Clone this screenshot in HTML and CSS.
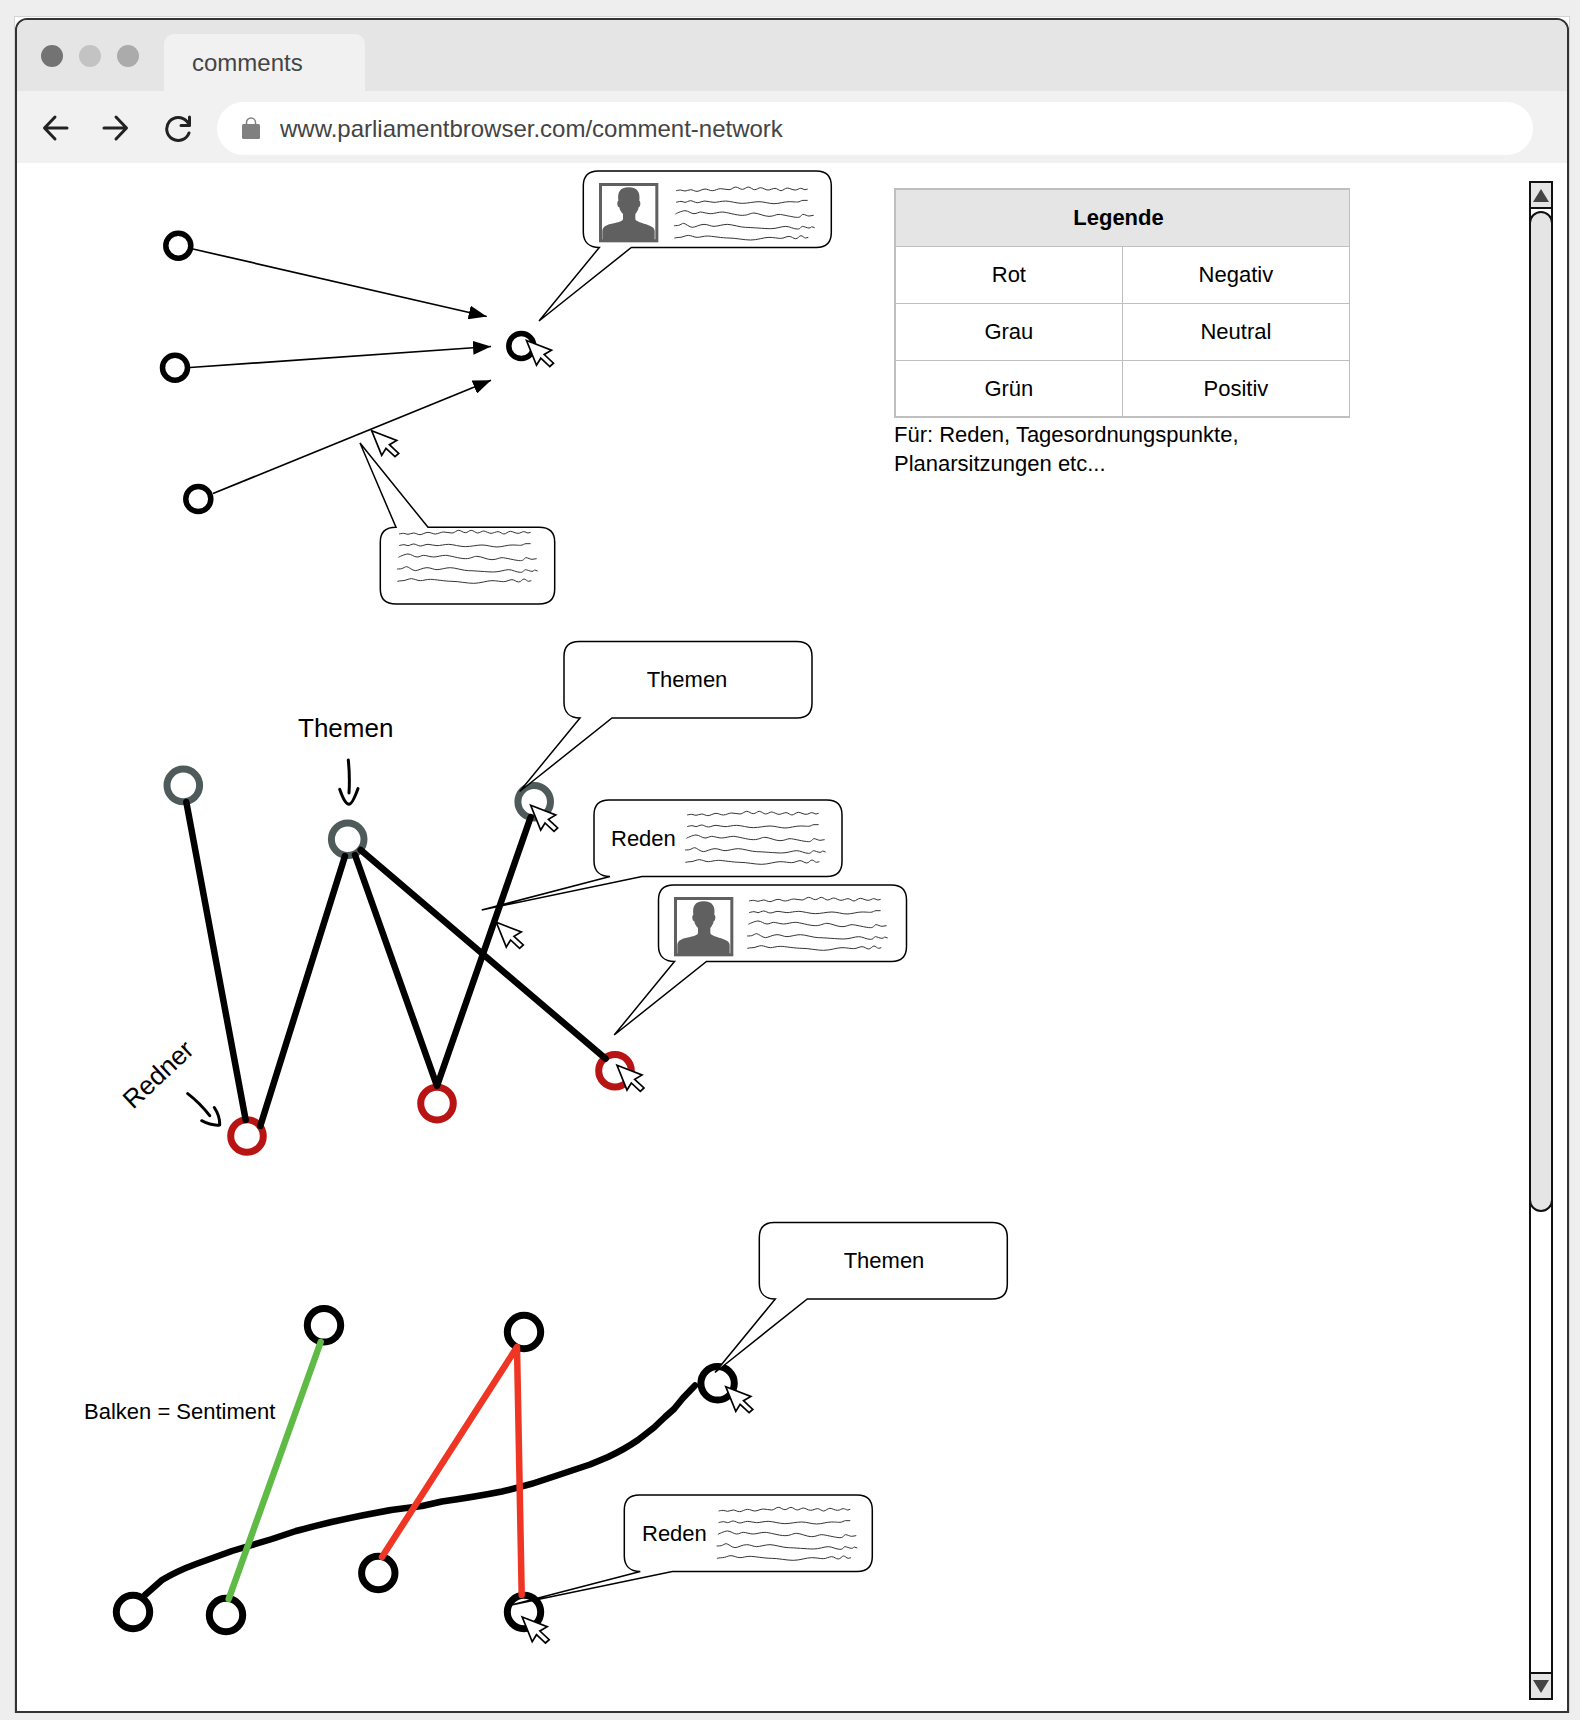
FILE: index.html
```html
<!DOCTYPE html>
<html lang="de">
<head>
<meta charset="utf-8">
<title>comments</title>
<link rel="stylesheet" href="styles.css">
</head>
<body>
<div class="frame">
<div class="window">
  <header class="tabstrip">
    <div class="dots"><span class="dot dot-dark"></span><span class="dot dot-light"></span><span class="dot dot-mid"></span></div>
    <a class="tab" href="#network">comments</a>
  </header>
  <nav class="toolbar">
    <button class="nav-button" type="button" aria-label="Zurück"><svg viewBox="0 0 28 28"><path d="M25 14H3M13 3 2.500 14 13 25"/></svg></button>
    <button class="nav-button" type="button" aria-label="Vor"><svg viewBox="0 0 28 28"><path d="M3 14h22M15 3l10.500 11L15 25"/></svg></button>
    <button class="nav-button reload" type="button" aria-label="Neu laden"><svg viewBox="0 0 28 28"><path d="M25 19A11.500 11.500 0 1 1 23 7.500L25.500 10.500M25.500 3v8.500H17"/></svg></button>
    <div class="address">
      <svg class="lock" viewBox="0 0 18 22"><rect x="0" y="7" width="18" height="15" rx="1.500" fill="#808080"/><path d="M4.500 8V5.500a4.500 4.500 0 0 1 9 0V8" fill="none" stroke="#808080" stroke-width="1.500"/></svg>
      <input class="url" type="text" aria-label="Adresse" value="www.parliamentbrowser.com/comment-network">
    </div>
  </nav>
  <main class="board" id="network">
    <svg class="diagram" viewBox="17 163 1000 1500">
      <defs>
        <marker id="arrow" viewBox="0 0 18 14" refX="18" refY="7" markerWidth="18" markerHeight="14" markerUnits="userSpaceOnUse" orient="auto"><path d="M0 0 18 7 0 14z"/></marker>
        <path id="cursor" class="cursor" d="M0 0 25 9.700 17.700 14 27 22.700 23.300 26 14.300 17.700 10 24.700z"/>
        <g id="portrait"><g transform="scale(.3333) translate(-60 -53)">
          <rect x="64.500" y="57.500" width="169" height="169" fill="#fff" stroke="#606060" stroke-width="9"/>
          <path fill="#606060" d="M70 230V197C71 180 90 177 108 173C122 170 132 166 132 161V146C126 140 122 134 121 126C114 124 113 108 118 106C115 82 122 66 149 66C176 66 184 82 181 106C186 108 185 124 179 126C178 134 174 140 169 146V161C169 166 180 170 195 175C212 180 226 184 227 197V230Z"/>
        </g></g>
        <g id="doodle"><g transform="scale(.3333) translate(-291 -77)" class="doodle">
          <path d="M291 77S300 75 305 75 313 78 318 78 329 74 335 74 347 79 354 79 370 72 378 72 392 77 400 77 416 71 425 71 442 74 450 74 463 66 470 66 483 73 490 73 502 66 508 66 521 74 527 74 539 68 545 68 560 75 567 75 581 70 588 70 600 77 606 77 618 69 625 69 640 75 648 75 659 70 665 70 674 74 678 74L686 72"/>
          <path d="M291 112S301 109 306 109 314 112 318 112 329 107 335 107 348 113 355 113 370 108 378 108 396 112 405 112 428 108 440 108 474 115 490 115 524 110 540 110 570 116 585 116 615 110 630 110 647 111 655 111 666 106 672 106L686 106"/>
          <path d="M289 147S308 137 318 137 336 146 345 146 358 141 365 141 385 146 395 146 418 141 430 141 472 151 490 151 513 144 525 144 555 154 570 154 590 148 600 148 642 157 655 157 666 148 672 148 684 153 690 153L704 151"/>
          <path d="M285 182S294 182 299 181 309 175 314 175 332 187 340 187 363 178 375 178 395 184 405 184 432 178 445 178 485 187 500 187 557 191 575 191 608 184 620 184 643 192 655 192 665 184 670 184 684 189 690 189 696 185 698 185L707 188"/>
          <path d="M286 219S296 217 303 217 320 211 328 211 346 217 355 217 373 213 385 213 430 219 450 219 495 225 515 225 555 217 570 217 595 220 605 220 622 214 630 214 643 221 650 221 661 212 666 212 675 219 680 219L688 217"/>
        </g></g>
      </defs>

      <!-- comments pointing at one speaker -->
      <g class="arrow-line">
        <path d="M194 249 487.700 316.500"/><path d="M191 367.500 492 346.500"/><path d="M214 493.500 492 380.300"/>
      </g>
      <g class="node small">
        <circle cx="179.300" cy="245.700" r="12.500"/><circle cx="176" cy="367.700" r="12.500"/><circle cx="199.300" cy="499" r="12.500"/><circle cx="522.300" cy="346" r="12.500"/>
      </g>
      <path class="callout" transform="translate(584.300 171)" d="M16 76.500C6 76.500 0 71 0 61V15C0 5 5 0 15 0H233C243 0 248 5 248 15V61.500C248 71.500 243 76.500 233 76.500H48L-44.300 150z"/>
      <use href="#portrait" x="600" y="183"/>
      <use href="#doodle" x="677" y="190.700"/>
      <path class="callout" d="M429 527.300H540C550 527.300 555.700 532 555.700 542V589C555.700 599 550 604 540 604H397C387 604 381.300 599 381.300 589V542C381.300 532 387 527.300 397 527.300L361 443z"/>
      <use href="#doodle" x="400" y="534"/>

      <!-- topics and speakers -->
      <path class="callout" transform="translate(595 800)" d="M16 76.500C6 76.500 0 71 0 61V15C0 5 5 0 15 0H233C243 0 248 5 248 15V61.500C248 71.500 243 76.500 233 76.500H48L-112.300 110z"/>
      <g class="node topic">
        <circle cx="184.300" cy="785.400" r="16.300"/><circle cx="348.700" cy="839.300" r="16.300"/><circle cx="535.200" cy="801.700" r="16.300"/>
      </g>
      <g class="node speaker">
        <circle cx="248" cy="1136" r="16.300"/><circle cx="438" cy="1103.600" r="16.300"/><circle cx="616" cy="1070.700" r="16.300"/>
      </g>
      <path class="edge" d="M187.300 802 246.700 1120M346 856 261.300 1126M356 855 438 1086 531.700 817M361.700 850 606.700 1058.700"/>
      <path class="hand" d="M349.300 760Q351 776 350 793M340.700 789.300C344 799 347 804.300 350 804.300S356 797 359 788.600M188.700 1093.600Q201 1103 210.700 1115.700M202.700 1120.700Q213 1126 220.700 1125 221 1116 215.300 1107.500"/>
      <path class="callout" transform="translate(565 641.500)" d="M16 76.500C6 76.500 0 71 0 61V15C0 5 5 0 15 0H233C243 0 248 5 248 15V61.500C248 71.500 243 76.500 233 76.500H48L-44.300 150z"/>
      <path class="callout" transform="translate(659.500 885)" d="M16 76.500C6 76.500 0 71 0 61V15C0 5 5 0 15 0H233C243 0 248 5 248 15V61.500C248 71.500 243 76.500 233 76.500H48L-44.300 150z"/>
      <use href="#doodle" x="688" y="815"/>
      <use href="#portrait" x="675" y="897"/>
      <use href="#doodle" x="750" y="901"/>
      <text class="label middle" x="688" y="687">Themen</text>
      <text class="label" x="612" y="846">Reden</text>
      <text class="note" x="299" y="737">Themen</text>
      <text class="note" transform="translate(134 1110) rotate(-43)">Redner</text>

      <!-- sentiment edges -->
      <g class="node">
        <circle cx="325" cy="1325.300" r="16.700"/><circle cx="525" cy="1332" r="16.700"/><circle cx="134" cy="1612" r="16.700"/><circle cx="227" cy="1615" r="16.700"/><circle cx="379.300" cy="1573" r="16.700"/><circle cx="525" cy="1612" r="16.700"/><circle cx="718.600" cy="1383.300" r="16.700"/>
      </g>
      <path class="edge" d="M146 1595 163 1580Q178 1571 197 1564L233 1551 273 1539 297 1531Q330 1522 363 1515.500 393 1509 423 1506L443 1501.500Q475 1497 503 1491.500 532 1485 558 1475.500L591 1464.500 609 1457Q626 1449 639 1440L655 1427.500 666 1417 675 1409 684 1398 696 1385.500"/>
      <path class="edge positive" d="M321.700 1342 229.700 1599"/>
      <path class="edge negative" d="M383 1557 518 1347 522.700 1595"/>
      <path class="callout" transform="translate(760.300 1222.500)" d="M16 76.500C6 76.500 0 71 0 61V15C0 5 5 0 15 0H233C243 0 248 5 248 15V61.500C248 71.500 243 76.500 233 76.500H48L-44.300 150z"/>
      <path class="callout" transform="translate(625.300 1495)" d="M16 76.500C6 76.500 0 71 0 61V15C0 5 5 0 15 0H233C243 0 248 5 248 15V61.500C248 71.500 243 76.500 233 76.500H48L-113 110z"/>
      <use href="#doodle" x="719.600" y="1511"/>
      <text class="label middle" x="885" y="1268">Themen</text>
      <text class="label" x="643" y="1541">Reden</text>
      <text class="label" x="85" y="1419">Balken = Sentiment</text>

      <use href="#cursor" x="527.500" y="340.500"/>
      <use href="#cursor" x="372.700" y="430.700"/>
      <use href="#cursor" x="531.700" y="805.300"/>
      <use href="#cursor" x="497.300" y="922.300"/>
      <use href="#cursor" x="618" y="1065.300"/>
      <use href="#cursor" x="726.800" y="1386.700"/>
      <use href="#cursor" x="523.200" y="1617"/>
    </svg>
    <section class="legend">
      <table>
        <thead><tr><th colspan="2">Legende</th></tr></thead>
        <tbody>
          <tr><td>Rot</td><td>Negativ</td></tr>
          <tr><td>Grau</td><td>Neutral</td></tr>
          <tr><td>Grün</td><td>Positiv</td></tr>
        </tbody>
      </table>
      <p>Für: Reden, Tagesordnungspunkte, Planarsitzungen etc...</p>
    </section>
    <div class="scrollbar">
      <button class="step" type="button" aria-label="Nach oben"><svg viewBox="0 0 16 13"><path d="M8 0 16 13H0z"/></svg></button>
      <div class="track"><div class="thumb"></div></div>
      <button class="step" type="button" aria-label="Nach unten"><svg viewBox="0 0 16 13"><path d="M8 13 16 0H0z"/></svg></button>
    </div>
  </main>
</div>
</div>
</body>
</html>
```
FILE: styles.css
```css
* { box-sizing: border-box; }

body {
  display: flex;
  min-height: 100vh;
  margin: 0;
  padding: 16px 10px 7px 14px;
  background: #eee;
  color: #000;
  font: 22px/29px "Liberation Sans", Arial, sans-serif;
}

.frame {
  display: flex;
  flex: 1;
  padding-top: 1px;
  border: 1px solid #d4d4d4;
  border-bottom: 0;
  background: #fff;
}

.window {
  display: flex;
  flex: 1;
  flex-direction: column;
  overflow: hidden;
  border: 2px solid #333;
  border-radius: 12px 12px 0 0;
}

.tabstrip {
  display: flex;
  align-items: flex-end;
  height: 71px;
  padding-left: 24px;
  background: #e5e5e5;
}

.dots {
  display: flex;
  gap: 16px;
  padding-bottom: 24px;
  margin-right: 25px;
}

.dot { width: 22px; height: 22px; border-radius: 50%; }
.dot-dark { background: #737373; }
.dot-light { background: #c3c3c3; }
.dot-mid { background: #ababab; }

.tab {
  width: 201px;
  height: 57px;
  padding-left: 28px;
  border-radius: 10px 10px 0 0;
  background: #f1f1f1;
  color: #444;
  font-size: 24px;
  line-height: 58px;
  text-decoration: none;
}

.toolbar {
  display: flex;
  align-items: center;
  height: 72px;
  padding: 2px 34px 0 25px;
  background: #f1f1f1;
}

.nav-button {
  width: 28px;
  height: 28px;
  margin-right: 31px;
  padding: 0;
  border: 0;
  background: none;
}

.nav-button svg {
  display: block;
  fill: none;
  stroke: #222;
  stroke-width: 3;
  stroke-linecap: round;
  stroke-linejoin: round;
}

.nav-button.reload { margin: 0 25px 0 4px; }

.address {
  display: flex;
  flex: 1;
  align-items: center;
  height: 53px;
  padding-left: 25px;
  border-radius: 27px;
  background: #fff;
}

.lock { width: 18px; height: 22px; }

.url {
  flex: 1;
  margin-left: 20px;
  padding: 0;
  border: 0;
  outline: 0;
  background: none;
  color: #444;
  font: inherit;
  font-size: 24px;
}

.board {
  display: grid;
  flex: 1;
  grid-template-columns: 877px 456px 1fr 24px;
  padding-right: 14px;
  background: #fff;
}

.diagram {
  grid-area: 1 / 1 / 2 / 4;
  width: 1000px;
  height: 1500px;
  margin-left: -1px;
}

.callout { fill: #fff; stroke: #000; stroke-width: 1.500; }
.cursor { fill: #fff; stroke: #000; stroke-width: 1.700; }
.doodle { fill: none; stroke: #333; stroke-width: 3; }
.arrow-line path { stroke: #000; stroke-width: 1.700; marker-end: url(#arrow); }
.node { fill: #fff; stroke: #000; stroke-width: 7; }
.node.small { stroke-width: 5.500; }
.node.topic { stroke: #4f5b5b; }
.node.speaker { stroke: #b81414; }

.edge {
  fill: none;
  stroke: #000;
  stroke-width: 6.500;
  stroke-linecap: round;
  stroke-linejoin: round;
}

.edge.positive { stroke: #5fba46; }
.edge.negative { stroke: #ef3524; }
.hand { fill: none; stroke: #000; stroke-width: 3; stroke-linecap: round; stroke-linejoin: round; }
.label { font-size: 22px; }
.label.middle { text-anchor: middle; }
.note { font-size: 26px; }

.legend {
  grid-area: 1 / 2 / 2 / 3;
  padding-top: 25px;
}

.legend table {
  width: 100%;
  border: 2px solid #bfbfbf;
  border-right-width: 1px;
  border-collapse: collapse;
  table-layout: fixed;
}

.legend th,
.legend td {
  height: 57px;
  padding: 0;
  border: 1px solid #bfbfbf;
  text-align: center;
}

.legend th { padding-right: 8px; background: #e5e5e5; }

.legend p { margin: 2px 40px 0 0; }

.scrollbar {
  display: flex;
  grid-area: 1 / 4 / 2 / 5;
  flex-direction: column;
  margin: 18px 0 11px;
  border: 2px solid #111;
}

.step {
  display: flex;
  align-items: center;
  justify-content: center;
  width: 20px;
  height: 24px;
  padding: 0;
  border: 0;
  background: #e5e5e5;
}

.step svg { width: 16px; height: 13px; fill: #444; }

.track {
  flex: 1;
  padding-top: 2px;
  border: solid #111;
  border-width: 2px 0;
}

.thumb {
  height: 68.5%;
  margin: 0 -2px;
  border: 2px solid #111;
  border-radius: 12px;
  background: #e5e5e5;
}
```
